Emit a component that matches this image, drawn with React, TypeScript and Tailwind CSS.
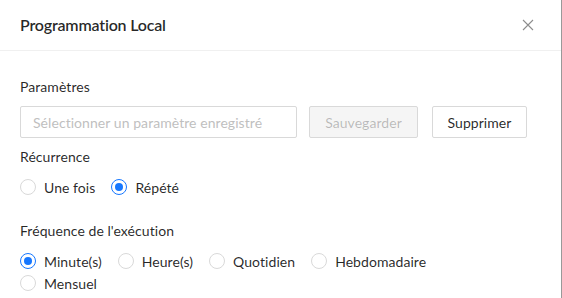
import React from "react";

function Radio({ label, checked }: { label: string; checked?: boolean }) {
  return (
    <label className="flex items-center h-[22px] mr-2">
      <span
        className={
          "relative w-4 h-4 rounded-full border bg-white flex items-center justify-center " +
          (checked ? "border-[#1677ff]" : "border-[#d9d9d9]")
        }
      >
        {checked && <span className="w-2 h-2 rounded-full bg-[#1677ff]" />}
      </span>
      <span className="px-2">{label}</span>
    </label>
  );
}

export default function App() {
  return (
    <div
      className="w-[562px] h-[298px] bg-white flex text-[14px] tracking-[0.06px] text-[rgba(0,0,0,0.85)] overflow-hidden"
      style={{ fontFamily: "Lato, 'Noto Sans', sans-serif" }}
    >
      <div className="w-[561px] flex flex-col">
        <div className="h-[51px] border-b border-[#f0f0f0] flex items-center justify-between pl-5 pr-[27px]">
          <div className="text-[16px] font-semibold leading-[22px] tracking-[-0.2px] text-[rgba(0,0,0,0.85)]">
            Programmation Local
          </div>
          <svg width="12" height="12" viewBox="0 0 12 12" className="text-[rgba(0,0,0,0.45)]">
            <path d="M1 1L11 11M11 1L1 11" stroke="currentColor" strokeWidth="1.1" />
          </svg>
        </div>
        <div className="pl-5 pt-[25px] flex flex-col">
          <div className="leading-[22px]">Paramètres</div>
          <div className="flex items-center mt-2 h-[32px]">
            <div className="w-[277px] h-[32px] border border-[#d9d9d9] rounded-[2px] flex items-center px-3 text-[#bfbfbf]">
              Sélectionner un paramètre enregistré
            </div>
            <div className="ml-3 w-[109px] h-[32px] border border-[#d9d9d9] rounded-[2px] bg-[#f5f5f5] flex items-center justify-center text-[rgba(0,0,0,0.25)]">
              Sauvegarder
            </div>
            <div className="ml-[14px] w-[95px] h-[32px] border border-[#d9d9d9] rounded-[2px] bg-white flex items-center justify-center">
              Supprimer
            </div>
          </div>
          <div className="leading-[22px] mt-[8px]">Récurrence</div>
          <div className="flex mt-[8px]">
            <Radio label="Une fois" />
            <Radio label="Répété" checked />
          </div>
          <div className="leading-[22px] mt-[22px]">Fréquence de l'exécution</div>
          <div className="flex flex-wrap w-[440px] mt-[8px]">
            <Radio label="Minute(s)" checked />
            <Radio label="Heure(s)" />
            <Radio label="Quotidien" />
            <Radio label="Hebdomadaire" />
            <Radio label="Mensuel" />
          </div>
        </div>
      </div>
      <div className="w-px h-full bg-[#999999]" />
    </div>
  );
}
